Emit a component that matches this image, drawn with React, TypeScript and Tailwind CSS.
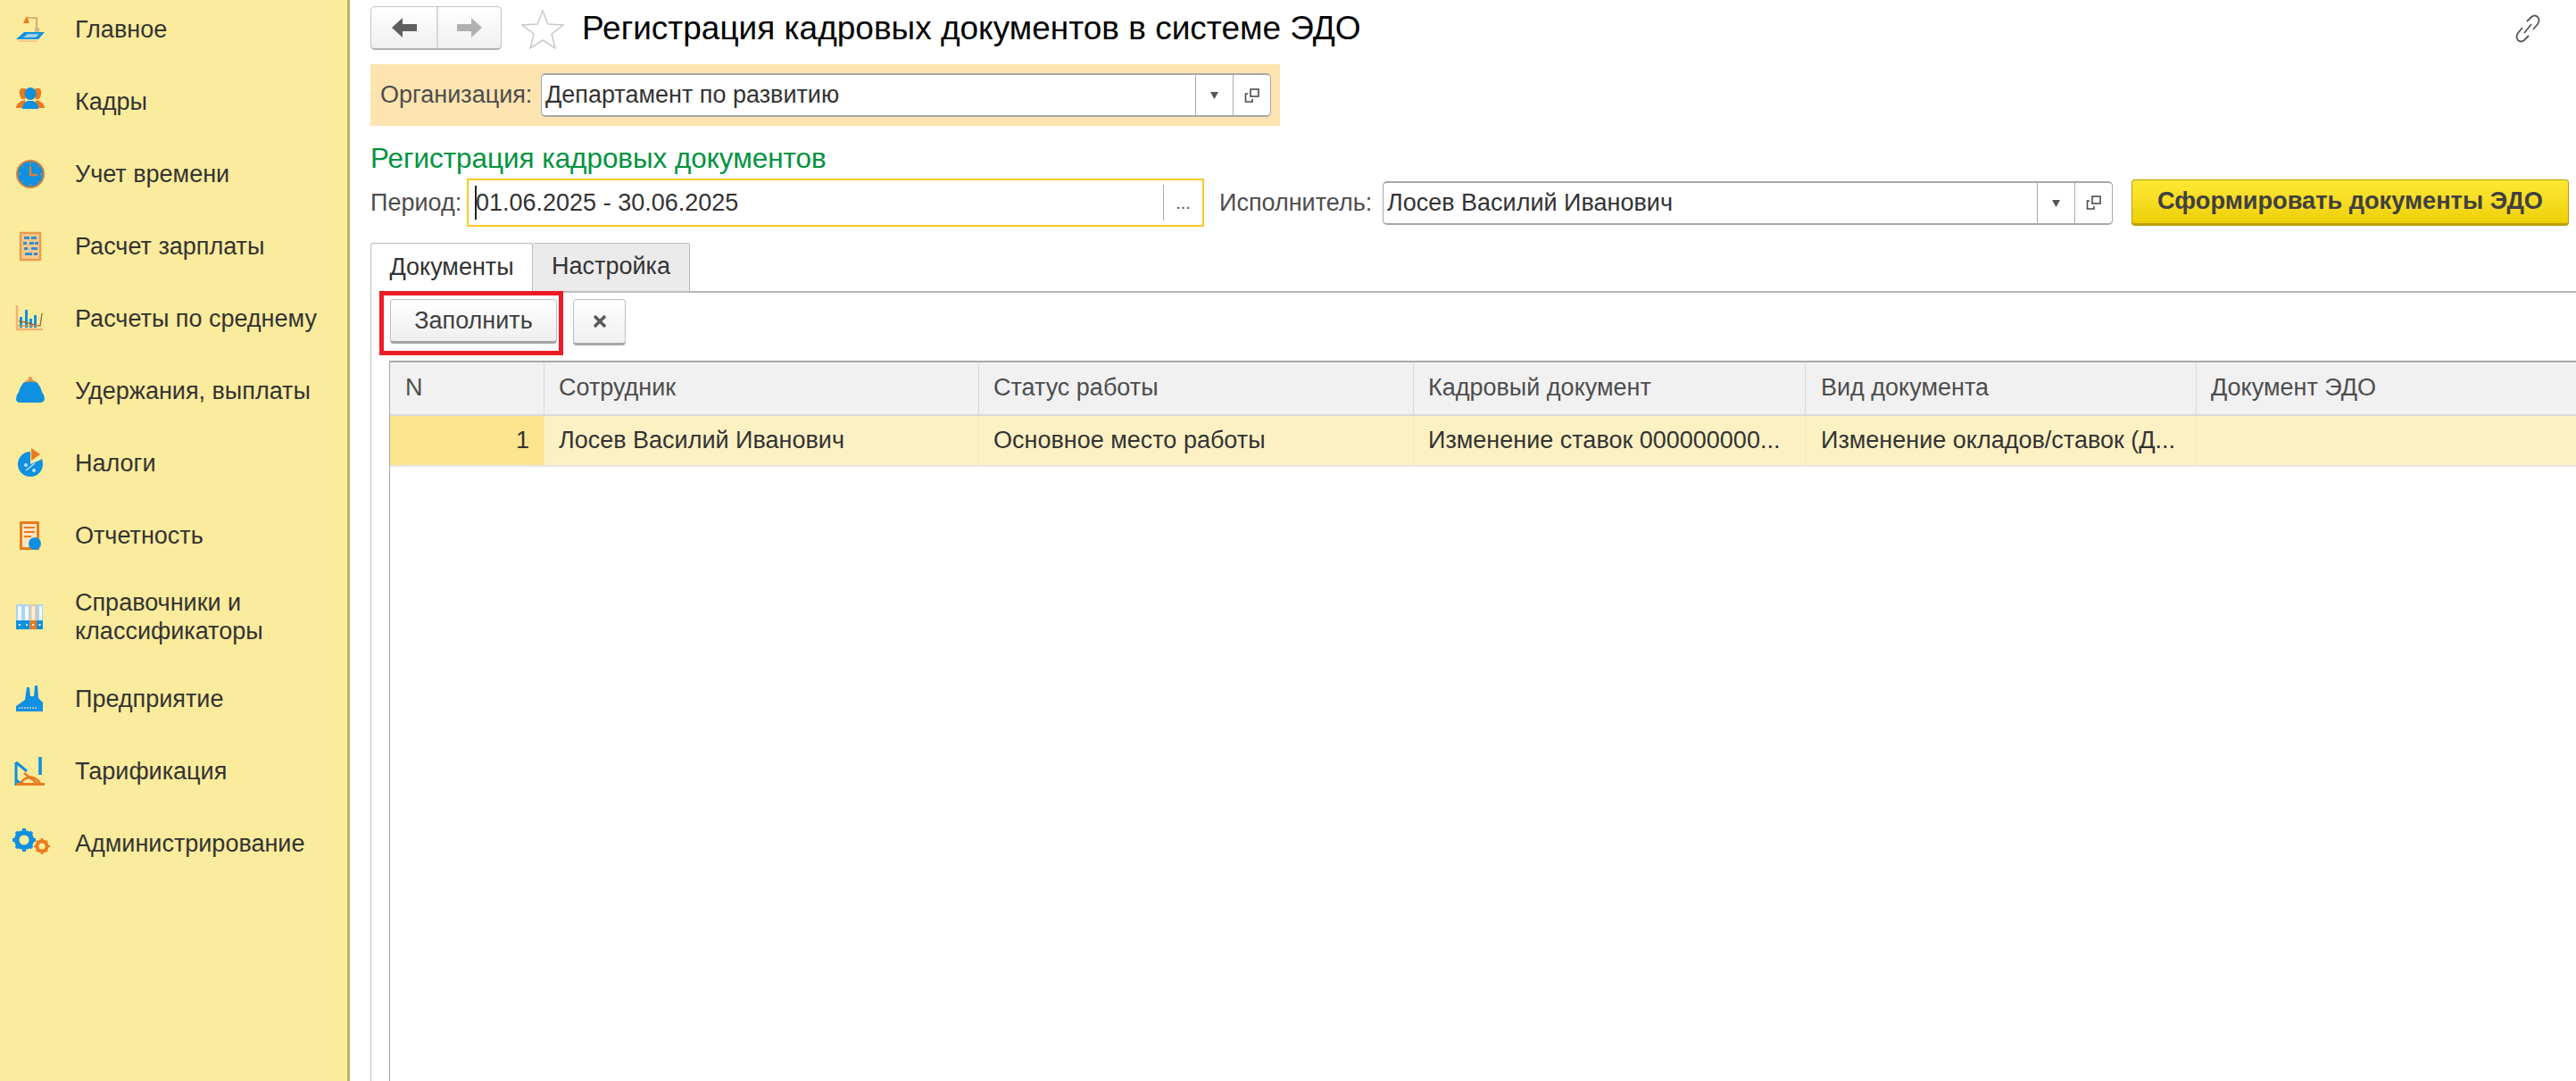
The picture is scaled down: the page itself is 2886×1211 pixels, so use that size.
import React from "react";

const B = "#0f90e0";
const O = "#e97c1f";
const Y = "#fbeb9c";

const icons: Record<string, React.ReactNode> = {
  home: (
    <>
      <path d="M0 27 L9 19 H32 L25 27 Z" fill={B} />
      <path d="M8 25 L13 21 H26 L22 25 Z" fill="#9fd0ee" />
      <path d="M2 28 H25 L23 30 H4 Z" fill="#f3c98e" />
      <path d="M8 9 L12 1 L15 9 Z" fill={O} />
      <path d="M13 3 H23 V19" stroke="#d99a62" strokeWidth="1.6" fill="none" />
      <path d="M21 14 H26 V19 H21 Z" fill="#c9b98c" />
    </>
  ),
  staff: (
    <>
      <path d="M6 1 H10 Q13 2 12 8 L10 13 H6 L4 8 Q3 2 6 1 Z" fill={O} />
      <path d="M22 1 H26 Q29 2 28 8 L26 13 H22 L20 8 Q19 2 22 1 Z" fill={O} />
      <path d="M0 23 Q0 18 6 15 L10 14 V23 Z" fill={O} />
      <path d="M32 23 Q32 18 26 15 L22 14 V23 Z" fill={O} />
      <ellipse cx="16" cy="7" rx="6.5" ry="7" fill={B} />
      <path d="M7 24 Q7 17 13 15 H19 Q25 17 25 24 Z" fill={B} />
    </>
  ),
  clock: (
    <>
      <circle cx="16" cy="16" r="15" fill={B} stroke="#d9803a" strokeWidth="2" />
      <path d="M16 7 V17 H24" stroke="#d9803a" strokeWidth="2.5" fill="none" />
      <path d="M16 3 V5 M16 27 V29 M3 16 H5 M27 16 H29 M7 7 L8 8 M25 7 L24 8 M7 25 L8 24 M25 25 L24 24" stroke="#c98f55" strokeWidth="1.5" />
    </>
  ),
  abacus: (
    <>
      <rect x="5" y="1" width="22" height="30" fill="#f7c98c" stroke="#ec9a4c" strokeWidth="2.4" />
      <path d="M8 7 H24 M8 13 H24 M8 19 H24 M8 25 H24" stroke="#e2b88a" strokeWidth="1" />
      <path d="M9 5 H15 V8 H9 Z M17 5 H23 V8 H17 Z M8 11 H12 V14 H8 Z M15 11 H20 V14 H15 Z M21 11 H25 V14 H21 Z M9 17 H13 V20 H9 Z M17 17 H24 V20 H17 Z M10 23 H18 V26 H10 Z M20 23 H24 V26 H20 Z" fill="#2f8fd0" />
    </>
  ),
  chart: (
    <>
      <path d="M1 1 V28 H30" stroke="#f0b273" strokeWidth="2.4" fill="none" />
      <path d="M4 26 V14 H7 V26 Z M10 26 V6 H13 V26 Z M15 26 V16 H18 V26 Z M20 26 V12 H23 V26 Z" fill={B} />
      <path d="M3 19 Q12 20 17 22 T27 24 L29 10" stroke="#a5682f" strokeWidth="1.4" fill="none" />
      <path d="M2 24 H28" stroke="#cf9a5f" strokeWidth="1.4" />
    </>
  ),
  purse: (
    <>
      <circle cx="16" cy="2.5" r="2.5" fill="#e49a57" />
      <path d="M9 7 Q16 2 23 7" stroke="#e08d45" strokeWidth="2" fill="none" />
      <path d="M8 7 Q16 4 24 7 Q28 12 29 17 Q32 21 32 25 Q31 29 27 29 H5 Q0 29 0 25 Q0 21 3 17 Q4 12 8 7 Z" fill={B} />
    </>
  ),
  taxes: (
    <>
      <circle cx="16" cy="17" r="14" fill={B} />
      <path d="M16 -1 L30 5 L28 12 L16 17 Z" fill={Y} />
      <path d="M17 -1 L27 6 L17 13 Z" fill={O} />
      <path d="M11 24 L21 16" stroke="#bfe0f5" strokeWidth="1.6" />
      <circle cx="11" cy="18" r="2" fill="#bfe0f5" />
      <circle cx="20" cy="24" r="2" fill="#bfe0f5" />
    </>
  ),
  report: (
    <>
      <rect x="4" y="0" width="22" height="32" fill={O} />
      <rect x="7" y="3" width="16" height="26" fill="#fbe6c2" />
      <path d="M9 7 H21 M9 12 H21 M9 17 H17" stroke={O} strokeWidth="2" />
      <circle cx="21" cy="25" r="7" fill={B} />
    </>
  ),
  folders: (
    <>
      <rect x="0" y="2" width="30" height="28" fill="#a6d6f2" />
      <path d="M2 4 H6 V20 H2 Z M10 4 H14 V20 H10 Z M18 4 H22 V20 H18 Z M26 4 H29 V20 H26 Z" fill="#f4fbff" />
      <rect x="0" y="20" width="8" height="10" fill={B} />
      <rect x="8" y="20" width="7.5" height="10" fill={B} />
      <rect x="15.5" y="2" width="7.5" height="18" fill="#efc49a" />
      <rect x="17.5" y="4" width="3.5" height="16" fill="#f8f1e4" />
      <rect x="15.5" y="20" width="7.5" height="10" fill={O} />
      <rect x="23" y="20" width="7" height="10" fill={B} />
      <path d="M3 25 H5 M11 25 H13 M18 25 H20 M25.5 25 H27.5" stroke="#e8f4fb" strokeWidth="1.8" />
    </>
  ),
  factory: (
    <>
      <path d="M0 30 V24 L10 17 L12 3 H15 L16 13 H20 L21 1 H24 L25 15 L30 20 V30 Z" fill={B} />
      <path d="M3 26 H24" stroke="#9cc4da" strokeWidth="2" strokeDasharray="2 1" />
    </>
  ),
  tariff: (
    <>
      <path d="M0 6 L12 16 M0 6 V32" stroke={B} strokeWidth="3" fill="none" />
      <path d="M27 0 V20" stroke={B} strokeWidth="3.6" />
      <path d="M0 32 V24 L8 30 Z" fill={B} />
      <path d="M5 31 A11.5 11.5 0 0 1 27 31" stroke={O} strokeWidth="3" fill="none" />
      <path d="M0 30.5 H32" stroke={O} strokeWidth="3" />
      <path d="M9 18 L23 29" stroke={O} strokeWidth="2.4" />
    </>
  ),
  admin: (
    <>
      <g transform="translate(-5 -1)">
        <circle cx="14" cy="13" r="8" fill="none" stroke={B} strokeWidth="6" />
        <path d="M14 0 V26 M1 13 H27 M5 4 L23 22 M23 4 L5 22" stroke={B} strokeWidth="4" />
        <circle cx="14" cy="13" r="5.5" fill={Y} />
      </g>
      <g transform="translate(20 10)">
        <circle cx="9" cy="9" r="5.5" fill="none" stroke={O} strokeWidth="4" />
        <path d="M9 0 V18 M0 9 H18 M3 3 L15 15 M15 3 L3 15" stroke={O} strokeWidth="2.6" />
        <circle cx="9" cy="9" r="3.6" fill={Y} />
      </g>
    </>
  ),
};

const nav: { key: string; label: React.ReactNode; tall?: boolean }[] = [
  { key: "home", label: "Главное" },
  { key: "staff", label: "Кадры" },
  { key: "clock", label: "Учет времени" },
  { key: "abacus", label: "Расчет зарплаты" },
  { key: "chart", label: "Расчеты по среднему" },
  { key: "purse", label: "Удержания, выплаты" },
  { key: "taxes", label: "Налоги" },
  { key: "report", label: "Отчетность" },
  { key: "folders", label: <>Справочники и<br />классификаторы</>, tall: true },
  { key: "factory", label: "Предприятие" },
  { key: "tariff", label: "Тарификация" },
  { key: "admin", label: "Администрирование" },
];

function CopyIcon() {
  return (
    <svg width="18" height="18" viewBox="0 0 18 18" fill="none" stroke="#4a4a4a" strokeWidth="1.6">
      <rect x="7" y="2" width="9" height="8" />
      <path d="M4 7 H1.5 V16 H9 V13" />
    </svg>
  );
}

function Caret() {
  return (
    <svg width="9" height="9" viewBox="0 0 9 9">
      <path d="M0 1 H9 L4.5 9 Z" fill="#555555" />
    </svg>
  );
}

function Picker({ value, width }: { value: string; width: string }) {
  return (
    <div className={`flex h-[49px] ${width} items-stretch rounded-[5px] border border-y-2 border-[#a8a8a8] bg-white`}>
      <div className="flex flex-1 items-center overflow-hidden pl-[4px] text-[#333333]">{value}</div>
      <div className="flex w-[42px] items-center justify-center border-l border-[#aaaaaa]"><Caret /></div>
      <div className="flex w-[42px] items-center justify-center border-l border-[#aaaaaa]"><CopyIcon /></div>
    </div>
  );
}

const columns = [
  { title: "N", cell: "1", w: "w-[173px]", cellClass: "bg-[#fde48f] justify-end pr-[16px]", headClass: "pl-[17px]" },
  { title: "Сотрудник", cell: "Лосев Василий Иванович", w: "w-[487px]", cellClass: "pl-[16px]", headClass: "pl-[16px]" },
  { title: "Статус работы", cell: "Основное место работы", w: "w-[487px]", cellClass: "pl-[16px]", headClass: "pl-[16px]" },
  { title: "Кадровый документ", cell: "Изменение ставок 000000000...", w: "w-[439px]", cellClass: "pl-[16px]", headClass: "pl-[16px]" },
  { title: "Вид документа", cell: "Изменение окладов/ставок (Д...", w: "w-[438px]", cellClass: "pl-[17px]", headClass: "pl-[17px]" },
  { title: "Документ ЭДО", cell: "", w: "flex-1", cellClass: "pl-[16px]", headClass: "pl-[16px]" },
];

export default function App() {
  return (
    <div className="flex h-[1211px] w-[2886px] overflow-hidden bg-white text-[27px] text-[#333333] font-['Liberation_Sans',Arial,sans-serif]">
      <aside className="flex h-full w-[392px] shrink-0 flex-col gap-[36px] border-r-[3px] border-[#bdb15e] bg-[#fbeb9c] pt-[10px]">
        {nav.map((n) => (
          <div key={n.key} className={`flex items-center pl-[18px] ${n.tall ? "h-[66px]" : "h-[45px]"}`}>
            <svg width="32" height="32" viewBox="0 0 32 32" className="shrink-0 overflow-visible">
              {icons[n.key]}
            </svg>
            <span className="ml-[34px] leading-[32px] text-[#333333]">{n.label}</span>
          </div>
        ))}
      </aside>

      <main className="flex min-w-0 flex-1 flex-col pl-[23px] pt-[7px]">
        <div className="flex h-[49px] items-center">
          <div className="flex h-[49px] w-[147px] rounded-[5px] border border-b-2 border-[#c4c4c4] border-b-[#b0b0b0] bg-gradient-to-b from-white to-[#f0f0f0]">
            <div className="flex w-[75px] items-center justify-center border-r-2 border-[#d9d9d9]">
              <svg width="28" height="22" viewBox="0 0 28 22"><path d="M0 11 L12 0 V7 H28 V15 H12 V22 Z" fill="#5f5f5f" /></svg>
            </div>
            <div className="flex flex-1 items-center justify-center">
              <svg width="28" height="22" viewBox="0 0 28 22"><path d="M28 11 L16 0 V7 H0 V15 H16 V22 Z" fill="#b0b0b0" /></svg>
            </div>
          </div>
          <svg width="48" height="44" viewBox="0 0 48 44" className="ml-[22px] mt-[2px]">
            <path d="M24 1 L30 16 L47 17 L34 27 L38 43 L24 34 L10 43 L14 27 L1 17 L18 16 Z" fill="none" stroke="#c9c9c9" strokeWidth="1.5" />
          </svg>
          <h1 className="ml-[20px] text-[37px] font-normal text-black">Регистрация кадровых документов в системе ЭДО</h1>
          <svg width="28" height="32" viewBox="0 0 28 32" fill="none" stroke="#555555" strokeWidth="1.8" className="ml-auto mr-[40px]">
            <path d="M13 8 L18 3 Q22 0 25 3 Q28 7 25 11 L20 17" />
            <path d="M15 24 L10 29 Q6 32 3 29 Q0 25 3 21 L8 15" />
            <path d="M10 21 L18 11" />
          </svg>
        </div>

        <div className="mt-[16px] flex h-[69px] w-[1019px] items-center bg-[#fee4b0] pl-[11px]">
          <span className="w-[180px] shrink-0 text-[#4d4d4d]">Организация:</span>
          <Picker value="Департамент по развитию" width="w-[818px]" />
        </div>

        <div className="mt-[22px] h-[30px] text-[31.4px] leading-[30px] text-[#00933f]">Регистрация кадровых документов</div>

        <div className="mt-[7px] flex h-[54px] items-center">
          <span className="w-[108px] shrink-0 text-[#4d4d4d]">Период:</span>
          <div className="flex h-[54px] w-[826px] shrink-0 items-center border-2 border-[#fbc926] bg-white">
            <div className="flex flex-1 items-center pl-[7px] text-[#333333]">
              <span className="h-[38px] w-[2px] bg-[#222222]" />
              <span className="-ml-[1px]">01.06.2025 - 30.06.2025</span>
            </div>
            <div className="flex h-[40px] w-[44px] items-center justify-center border-l border-[#aaaaaa] text-[20px] text-[#555555]">...</div>
          </div>
          <span className="ml-[17px] w-[183px] shrink-0 text-[#4d4d4d]">Исполнитель:</span>
          <Picker value="Лосев Василий Иванович" width="w-[818px]" />
          <button className="ml-[21px] h-[52px] w-[490px] rounded-[4px] border border-b-[3px] border-[#b9a100] bg-gradient-to-b from-[#ffe833] to-[#eed000] pb-[1px] text-[27.2px] font-bold text-[#404040]">
            Сформировать документы ЭДО
          </button>
        </div>

        <div className="mt-[18px] flex h-[56px]">
          <div className="flex w-[182px] items-center justify-center rounded-t-[3px] border border-b-0 border-[#bdbdbd] bg-white pb-[2px]">Документы</div>
          <div className="flex w-[176px] items-center justify-center rounded-t-[3px] border border-b-2 border-l-0 border-[#bdbdbd] bg-[#ebebeb] pb-[2px]">Настройка</div>
          <div className="flex-1 border-b-2 border-[#b5b5b5]" />
        </div>

        <div className="flex min-h-0 flex-1 flex-col border-l border-[#c4c4c4] pl-[9px]">
          <div className="-mt-[2px] flex items-start">
            <div className="h-[72px] w-[206px] shrink-0 border-[5px] border-[#ed1c24] pl-[7px] pt-[4px]">
              <button className="h-[50px] w-[187px] rounded-[4px] border border-b-[3px] border-[#c0c0c0] border-b-[#a3a3a3] bg-gradient-to-b from-white to-[#efefef] text-[#404040]">
                Заполнить
              </button>
            </div>
            <button className="ml-[11px] mt-[9px] flex h-[52px] w-[59px] items-center justify-center rounded-[4px] border border-b-[3px] border-[#c0c0c0] border-b-[#a8a8a8] bg-gradient-to-b from-white to-[#efefef]">
              <svg width="14" height="14" viewBox="0 0 14 14"><path d="M1 1 L13 13 M13 1 L1 13" stroke="#5a5a5a" strokeWidth="3.4" /></svg>
            </button>
          </div>

          <div className="ml-[11px] mt-[6px] flex min-h-0 flex-1 flex-col border-l border-t-2 border-[#a8a8a8]">
            <div className="flex h-[60px] border-b-2 border-[#d9d9d9] bg-[#f1f1f1]">
              {columns.map((c) => (
                <div key={c.title} className={`flex items-center pb-[2px] text-[#4d4d4d] ${c.title === "Документ ЭДО" ? "" : "border-r border-[#d9d9d9]"} ${c.w} ${c.headClass}`}>{c.title}</div>
              ))}
            </div>
            <div className="flex h-[57px] border-b-2 border-[#e6e6e6] bg-[#fdf1c4]">
              {columns.map((c) => (
                <div key={c.title} className={`flex items-center overflow-hidden whitespace-nowrap text-[#333333] ${c.title === "Документ ЭДО" ? "" : "border-r border-[#f5e9c0]"} ${c.w} ${c.cellClass}`}>{c.cell}</div>
              ))}
            </div>
          </div>
        </div>
      </main>
    </div>
  );
}
